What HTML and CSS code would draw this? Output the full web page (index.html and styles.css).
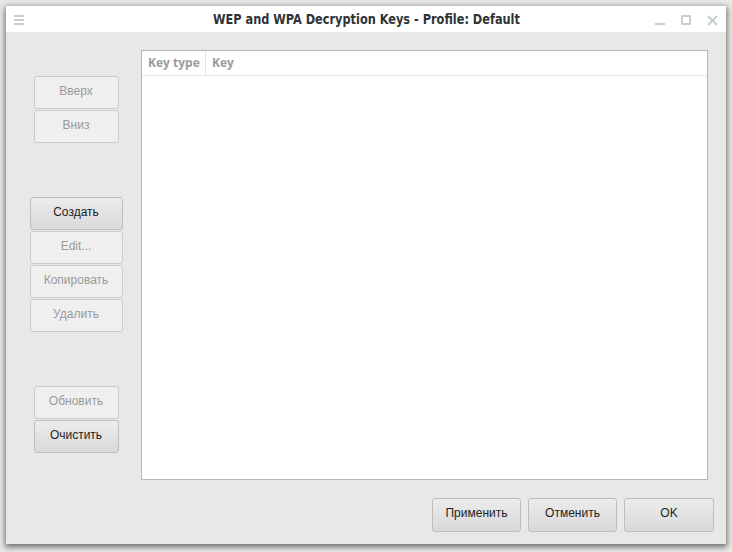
FILE: index.html
```html
<!DOCTYPE html>
<html>
<head>
<meta charset="utf-8">
<link rel="stylesheet" href="styles.css">
</head>
<body>
<div class="desk">
  <div class="window">
    <div class="titlebar">
      <svg class="menu-icon" width="10" height="10" viewBox="0 0 10 10"><rect x="0" y="0" width="10" height="2" fill="#c6ced2"/><rect x="0" y="4" width="10" height="2" fill="#c6ced2"/><rect x="0" y="8" width="10" height="2" fill="#c6ced2"/></svg>
      <div class="title"><span class="title-text">WEP and WPA Decryption Keys - Profile: Default</span></div>
      <div class="controls">
        <svg width="10" height="10" viewBox="0 0 10 10"><rect x="0" y="8" width="10" height="2" fill="#c6ced2"/></svg>
        <svg width="10" height="10" viewBox="0 0 10 10"><rect x="1" y="1" width="8" height="8" fill="none" stroke="#c6ced2" stroke-width="2"/></svg>
        <svg width="11" height="11" viewBox="0 0 11 11"><path d="M1 1 L10 10 M10 1 L1 10" stroke="#c6ced2" stroke-width="1.8"/></svg>
      </div>
    </div>
    <div class="content">
      <div class="main">
        <div class="side">
          <div class="group narrow">
            <button class="btn disabled">Вверх</button>
            <button class="btn disabled">Вниз</button>
          </div>
          <div class="group wide">
            <button class="btn">Создать</button>
            <button class="btn disabled">Edit...</button>
            <button class="btn disabled">Копировать</button>
            <button class="btn disabled">Удалить</button>
          </div>
          <div class="group narrow">
            <button class="btn disabled">Обновить</button>
            <button class="btn">Очистить</button>
          </div>
        </div>
        <div class="table">
          <div class="thead">
            <div class="th th-type">Key type</div>
            <div class="th th-key">Key</div>
          </div>
        </div>
      </div>
      <div class="footer">
        <button class="btn big">Применить</button>
        <button class="btn big">Отменить</button>
        <button class="btn big ok">OK</button>
      </div>
    </div>
  </div>
</div>
</body>
</html>
```
FILE: styles.css
```css
html, body {
  margin: 0;
  padding: 0;
}
body {
  width: 732px;
  height: 552px;
  overflow: hidden;
  background: #e9e9e9;
  font-family: "Liberation Sans", Arial, sans-serif;
}
.desk {
  padding: 6px 6px 8px 6px;
  height: 552px;
  box-sizing: border-box;
}
.window {
  width: 720px;
  height: 538px;
  display: flex;
  flex-direction: column;
  background: #e8e8e7;
  box-shadow: 0 2px 6px 1px rgba(0,0,0,0.55);
}
.titlebar {
  height: 26px;
  background: #ffffff;
  display: flex;
  align-items: center;
  padding: 0 8px 0 8px;
  box-sizing: border-box;
}
.menu-icon {
  margin-top: 2px;
}
.title {
  flex: 1;
  text-align: center;
  font-family: "DejaVu Sans Condensed", "DejaVu Sans", sans-serif;
  font-weight: bold;
  font-size: 14px;
  color: #2e3436;
  padding-left: 53px;
}
.title-text {
  display: inline-block;
  transform: scaleX(0.9);
}
.controls {
  display: flex;
  align-items: center;
  gap: 16px;
  margin-top: 2px;
}
.content {
  flex: 1;
  display: flex;
  flex-direction: column;
  padding: 18px 18px 12px 5px;
}
.main {
  flex: 1;
  display: flex;
}
.side {
  width: 130px;
  display: flex;
  flex-direction: column;
  align-items: center;
  padding-top: 26px;
  gap: 54px;
}
.group {
  display: flex;
  flex-direction: column;
  gap: 1px;
}
.group.narrow .btn { width: 85px; }
.group.wide .btn { width: 93px; }
.btn {
  height: 33px;
  box-sizing: border-box;
  border: 1px solid #bdbdbd;
  border-radius: 3px;
  background: linear-gradient(#ececec, #d9d9d9);
  color: #1e1e1e;
  font-family: "Liberation Sans", Arial, sans-serif;
  font-size: 12px;
  padding: 0 0 3px 0;
}
.btn.disabled {
  background: #efefef;
  color: #9a9a9a;
  border-color: #cbcbcb;
}
.table {
  flex: 1;
  background: #ffffff;
  border: 1px solid #b6b6b6;
}
.thead {
  display: flex;
  height: 24px;
  border-bottom: 1px solid #e6e6e6;
}
.th {
  font-family: "Open Sans", sans-serif;
  font-weight: bold;
  font-size: 12px;
  color: #9b9b9b;
  line-height: 24px;
  padding-left: 6px;
  box-sizing: border-box;
}
.th-type {
  width: 64px;
  border-right: 1px solid #e6e6e6;
}
.footer {
  display: flex;
  justify-content: flex-end;
  gap: 7px;
  padding-top: 18px;
  margin-right: -6px;
}
.btn.big {
  width: 89px;
  height: 34px;
  padding-bottom: 5px;
}
.btn.ok { width: 90px; }
```
